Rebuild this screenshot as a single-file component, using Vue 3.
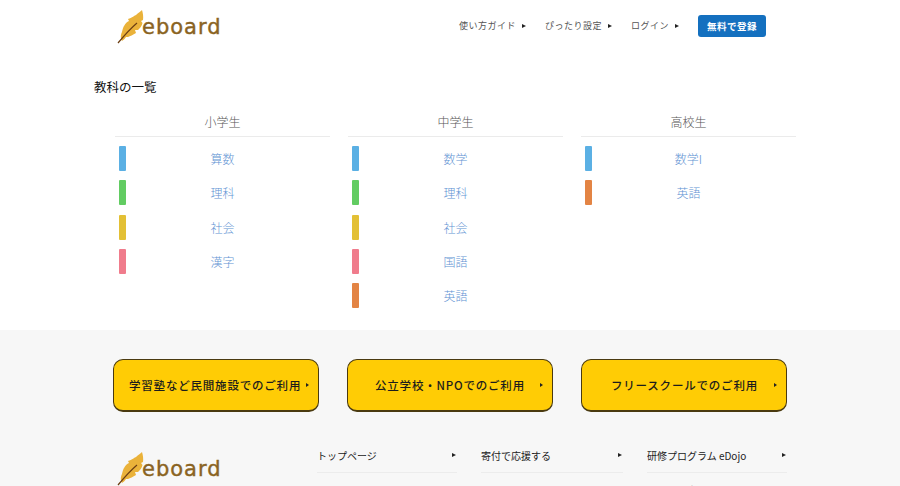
<script setup>
const navItems = ['使い方ガイド', 'ぴったり設定', 'ログイン']

const columns = [
  {
    title: '小学生',
    subjects: [
      { name: '算数', color: '#5bb0e4' },
      { name: '理科', color: '#62cc62' },
      { name: '社会', color: '#e3c035' },
      { name: '漢字', color: '#f07c8c' },
    ],
  },
  {
    title: '中学生',
    subjects: [
      { name: '数学', color: '#5bb0e4' },
      { name: '理科', color: '#62cc62' },
      { name: '社会', color: '#e3c035' },
      { name: '国語', color: '#f07c8c' },
      { name: '英語', color: '#e38444' },
    ],
  },
  {
    title: '高校生',
    subjects: [
      { name: '数学I', color: '#5bb0e4' },
      { name: '英語', color: '#e38444' },
    ],
  },
]

const useButtons = [
  { label: '学習塾など民間施設でのご利用', kind: 'tight' },
  { label: '公立学校・NPOでのご利用', kind: 'mid' },
  { label: 'フリースクールでのご利用', kind: 'wide' },
]

const footerLinks = [
  ['トップページ', 'メール一覧'],
  ['寄付で応援する', '企業・自治体様の方へ'],
  ['研修プログラム eDojo', 'セミナー事業'],
]

const featherBody = 'M5 31C3 27 4 24 5 22C6 17 8 13 12 11L11 9C15 8 18 5 19 5C21 3 24 1 25 0C26 3 26.5 7 26 10L24 11L25.5 13C25 16 23 18 21 20L18 20L19 23C16 25 13 26 11 27L9 27C8 29 6 30 5 31Z'
const featherStem = 'M1 33C6 27 13 19 20 13'
</script>

<template>
  <div class="page">
    <header class="site-header">
      <a class="logo">
        <svg class="feather" viewBox="0 0 30 34" width="30" height="34">
          <path :d="featherBody" fill="#eab23a" />
          <path :d="featherStem" fill="none" stroke="#6b3d12" stroke-width="1.2" />
        </svg>
        <span class="logo-text">eboard</span>
      </a>
      <nav class="nav">
        <a v-for="item in navItems" :key="item" class="nav-link">{{ item }}<i class="arrow" /></a>
        <a class="signup">無料で登録</a>
      </nav>
    </header>

    <main class="subjects">
      <h2 class="heading">教科の一覧</h2>
      <div class="columns">
        <section v-for="col in columns" :key="col.title" class="col">
          <h3 class="col-title">{{ col.title }}</h3>
          <a v-for="s in col.subjects" :key="s.name" class="subject">
            <span class="bar" :style="{ background: s.color }" />
            <span class="subject-name">{{ s.name }}</span>
          </a>
        </section>
      </div>
    </main>

    <footer class="footer">
      <div class="use-buttons">
        <a v-for="b in useButtons" :key="b.label" class="use-btn" :class="b.kind">
          <span>{{ b.label }}</span><i class="arrow" />
        </a>
      </div>
      <div class="footer-main">
        <a class="logo footer-logo">
          <svg class="feather" viewBox="0 0 30 34" width="30" height="34">
            <path :d="featherBody" fill="#eab23a" />
            <path :d="featherStem" fill="none" stroke="#6b3d12" stroke-width="1.2" />
          </svg>
          <span class="logo-text">eboard</span>
        </a>
        <div class="footer-links">
          <div v-for="col in footerLinks" :key="col[0]" class="footer-col">
            <a v-for="link in col" :key="link" class="footer-link">{{ link }}<i class="arrow" /></a>
          </div>
        </div>
      </div>
    </footer>
  </div>
</template>

<style>
html,
body {
  margin: 0;
  background: #fff;
  overflow: hidden;
}
</style>

<style scoped>
.page {
  width: 900px;
  height: 486px;
  overflow: hidden;
  font-family: 'Noto Sans CJK JP', 'Noto Sans', sans-serif;
}

.arrow {
  display: inline-block;
  width: 0;
  height: 0;
  border-left: 4px solid #222;
  border-top: 2.5px solid transparent;
  border-bottom: 2.5px solid transparent;
}

.site-header {
  height: 54px;
  box-sizing: border-box;
  padding: 8px 134px 0 117px;
  display: flex;
  justify-content: space-between;
  align-items: flex-start;
}

.logo {
  display: flex;
  align-items: flex-start;
  height: 36px;
}

.feather {
  flex: none;
  margin-top: 2px;
}

.logo-text {
  font-family: 'DejaVu Sans', sans-serif;
  font-size: 21px;
  line-height: 24px;
  margin: 7px 0 0 -5px;
  color: #8a6322;
  letter-spacing: 1px;
  -webkit-text-stroke: 0.4px #8a6322;
}

.nav {
  display: flex;
  align-items: center;
  height: 37px;
  margin-top: -1px;
}

.nav-link {
  display: flex;
  align-items: center;
  font-size: 9px;
  letter-spacing: 0.5px;
  color: #555;
  margin-right: 19px;
}

.nav-link .arrow {
  margin-left: 6px;
}

.signup {
  width: 68px;
  height: 22px;
  background: #1470bf;
  border-radius: 3px;
  color: #fff;
  font-size: 9.5px;
  font-weight: 700;
  letter-spacing: 0.5px;
  text-align: center;
  line-height: 22px;
}

.subjects {
  height: 276px;
  box-sizing: border-box;
  padding: 23px 104px 0 94px;
}

.heading {
  margin: 0;
  font-size: 12.5px;
  line-height: 20px;
  font-weight: 400;
  color: #111;
}

.columns {
  display: grid;
  grid-template-columns: repeat(3, 215px);
  column-gap: 18px;
  margin: 15px 0 0 21px;
}

.col-title {
  margin: 0 0 9px;
  height: 24px;
  font-size: 12px;
  line-height: 20px;
  font-weight: 300;
  color: #555;
  text-align: center;
  border-bottom: 1px solid #ebebeb;
}

.subject {
  display: flex;
  align-items: center;
  height: 25px;
  margin-bottom: 9.3px;
  padding-left: 4px;
}

.bar {
  flex: none;
  width: 7px;
  height: 25px;
  border-radius: 1px;
}

.subject-name {
  flex: 1;
  padding-right: 11px;
  text-align: center;
  font-size: 12px;
  font-weight: 300;
  color: #5f93d3;
}

.footer {
  height: 156px;
  background: #f7f7f7;
  box-sizing: border-box;
  padding: 29px 113px 0;
}

.use-buttons {
  display: grid;
  grid-template-columns: repeat(3, 206px);
  column-gap: 28px;
}

.use-btn {
  height: 53px;
  box-sizing: border-box;
  background: #ffcc05;
  border: 1px solid #4a3a10;
  border-bottom-width: 2px;
  border-radius: 10px;
  display: flex;
  align-items: center;
  justify-content: space-between;
  font-size: 11.5px;
  font-weight: 500;
  letter-spacing: 0.8px;
  color: #1c1c1c;
}

.use-btn.tight {
  padding: 0 9px 0 15px;
}

.use-btn.mid {
  padding: 0 9px 0 27px;
}

.use-btn.wide {
  padding: 0 9px 0 29px;
}

.use-btn .arrow {
  border-left-width: 3px;
  border-top-width: 2px;
  border-bottom-width: 2px;
}

.footer-main {
  display: flex;
  margin-top: 26px;
}

.footer-logo {
  flex: none;
  box-sizing: border-box;
  width: 204px;
  padding-left: 4px;
  margin-top: 12px;
}

.footer-links {
  display: grid;
  grid-template-columns: 140px 142px 140px;
  column-gap: 24px;
}

.footer-link {
  display: flex;
  align-items: center;
  justify-content: space-between;
  height: 35px;
  box-sizing: border-box;
  padding: 0 1px 0 0;
  border-bottom: 1px solid #ececec;
  font-size: 10px;
  color: #222;
}
</style>
